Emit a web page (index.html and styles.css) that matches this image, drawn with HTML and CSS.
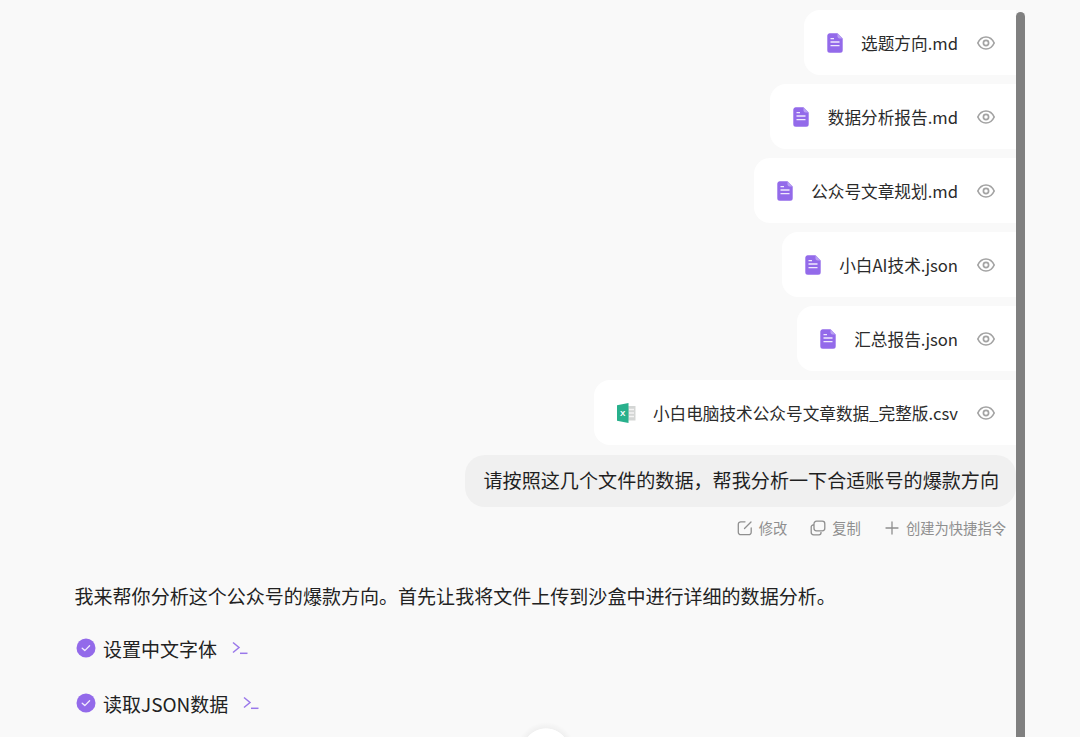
FILE: index.html
```html
<!DOCTYPE html>
<html lang="zh-CN">
<head>
<meta charset="utf-8">
<title>文件分析</title>
<link rel="stylesheet" href="styles.css">
</head>
<body>
<svg class="defs" width="0" height="0" aria-hidden="true">
  <symbol id="doc" viewBox="0 0 16 20">
    <path d="M2.500 0.300H10.500L15.700 5.500V17.200a2.500 2.500 0 0 1-2.500 2.500H2.800A2.500 2.500 0 0 1 .3 17.200V2.500A2.500 2.500 0 0 1 2.500.3z" fill="#936aea"/>
    <path d="M10.500.3L15.700 5.500H12.500a2 2 0 0 1-2-2z" fill="#b9a0f3"/>
    <path d="M3.500 5.600h3.500M3.500 9h9M3.500 12.600h9" stroke="#f0e9fd" stroke-width="1.300" fill="none"/>
  </symbol>
  <symbol id="eye" viewBox="0 0 18 14">
    <path d="M.8 7C2.700 2.900 5.600 1 9 1S15.300 2.900 17.200 7C15.300 11.100 12.400 13 9 13S2.700 11.100.8 7z" fill="none" stroke="#a3a3a3" stroke-width="1.700"/>
    <circle cx="9" cy="7" r="2.600" fill="none" stroke="#a3a3a3" stroke-width="1.700"/>
  </symbol>
  <symbol id="check" viewBox="0 0 20 20">
    <circle cx="10" cy="10" r="9.500" fill="#936aea"/>
    <path d="M6.200 10.200l2.600 2.400 4.800-4.800" fill="none" stroke="#f3edfe" stroke-width="1.300" stroke-linecap="round" stroke-linejoin="round"/>
  </symbol>
  <symbol id="term" viewBox="0 0 16 14">
    <path d="M1 1.500L7 6.500 1 11.500" fill="none" stroke="#9a78ea" stroke-width="1.500"/>
    <path d="M8 12.300h7.500" stroke="#9a78ea" stroke-width="1.500"/>
  </symbol>
</svg>

<main class="chat">
  <section class="files">
    <div class="file">
      <svg class="file-icon"><use href="#doc"/></svg>
      <span class="file-name">选题方向.md</span>
      <svg class="eye"><use href="#eye"/></svg>
    </div>
    <div class="file">
      <svg class="file-icon"><use href="#doc"/></svg>
      <span class="file-name">数据分析报告.md</span>
      <svg class="eye"><use href="#eye"/></svg>
    </div>
    <div class="file">
      <svg class="file-icon"><use href="#doc"/></svg>
      <span class="file-name">公众号文章规划.md</span>
      <svg class="eye"><use href="#eye"/></svg>
    </div>
    <div class="file">
      <svg class="file-icon"><use href="#doc"/></svg>
      <span class="file-name">小白AI技术.json</span>
      <svg class="eye"><use href="#eye"/></svg>
    </div>
    <div class="file">
      <svg class="file-icon"><use href="#doc"/></svg>
      <span class="file-name">汇总报告.json</span>
      <svg class="eye"><use href="#eye"/></svg>
    </div>
    <div class="file">
      <svg class="file-icon xls" viewBox="0 0 19 20">
        <path d="M9 3h9.500v14.500H9z" fill="#d4d6d5"/>
        <path d="M12 6.500h5M12 10h5M12 13.500h5" stroke="#f4f4f4" stroke-width="1.400"/>
        <path d="M0 2.200l11.500-2.200v20L0 17.800z" fill="#28b08c"/>
        <text x="3" y="13.300" class="xls-x">X</text>
      </svg>
      <span class="file-name">小白电脑技术公众号文章数据_完整版.csv</span>
      <svg class="eye"><use href="#eye"/></svg>
    </div>
  </section>

  <div class="bubble">请按照这几个文件的数据，帮我分析一下合适账号的爆款方向</div>

  <div class="actions">
    <span class="action">
      <svg class="action-icon" viewBox="0 0 16 16"><path d="M8 1.800H3.800a2.500 2.500 0 0 0-2.500 2.500v7.900a2.500 2.500 0 0 0 2.500 2.500h7.900a2.500 2.500 0 0 0 2.500-2.500V8M7.500 8.500L14 2" fill="none" stroke="#8f8f8f" stroke-width="1.300" stroke-linecap="round"/></svg>
      修改
    </span>
    <span class="action">
      <svg class="action-icon" viewBox="0 0 16 16"><path d="M6.500 1.200h5.800a2.500 2.500 0 0 1 2.500 2.500v4.600a2.500 2.500 0 0 1-2.500 2.500H6.500A2.500 2.500 0 0 1 4 8.300V3.700a2.500 2.500 0 0 1 2.500-2.500z" fill="none" stroke="#8f8f8f" stroke-width="1.300"/><path d="M4 5H3.200a2 2 0 0 0-2 2v5.300a2.500 2.500 0 0 0 2.500 2.500H9a2 2 0 0 0 2-2v-.8" fill="none" stroke="#8f8f8f" stroke-width="1.300"/></svg>
      复制
    </span>
    <span class="action">
      <svg class="action-icon" viewBox="0 0 16 16"><path d="M8 2v12M2 8h12" fill="none" stroke="#8f8f8f" stroke-width="1.300" stroke-linecap="round"/></svg>
      创建为快捷指令
    </span>
  </div>

  <p class="reply">我来帮你分析这个公众号的爆款方向。首先让我将文件上传到沙盒中进行详细的数据分析。</p>

  <div class="step">
    <svg class="step-check"><use href="#check"/></svg>
    <span>设置中文字体</span>
    <svg class="step-term"><use href="#term"/></svg>
  </div>
  <div class="step">
    <svg class="step-check"><use href="#check"/></svg>
    <span>读取JSON数据</span>
    <svg class="step-term"><use href="#term"/></svg>
  </div>
</main>

<div class="scrollbar"></div>
<div class="scroll-down"></div>
</body>
</html>
```
FILE: styles.css
```css
* { box-sizing: border-box; }
html, body { height: 100%; }
body {
  margin: 0;
  height: 737px;
  overflow: hidden;
  position: relative;
  background: #f9f9f9;
  color: #222;
  font-family: "Noto Sans CJK SC", "Noto Sans", sans-serif;
}
.defs { position: absolute; }
.chat {
  width: 1016px;
  height: 737px;
  padding: 10px 0 0 74.5px;
  display: flex;
  flex-direction: column;
}
.files {
  display: flex;
  flex-direction: column;
  align-items: flex-end;
  gap: 9px;
}
.file {
  height: 65px;
  display: flex;
  align-items: center;
  padding: 0 21px 0 23px;
  background: #fff;
  border-radius: 16px 0 0 16px;
}
.file-icon { width: 16px; height: 20px; margin-right: 18.5px; }
.file-icon.xls { width: 19px; margin-right: 17px; }
.xls-x { font: 700 8px "Liberation Sans", sans-serif; fill: #fff; }
.file-name { font-size: 16.65px; line-height: 24px; color: #2b2b2b; }
.eye { width: 18px; height: 14px; margin-left: 19px; }
.bubble {
  align-self: flex-end;
  margin-top: 10px;
  height: 52px;
  padding: 0 17px 2px 18.5px;
  display: flex;
  align-items: center;
  background: #f0f0f0;
  border-radius: 20px;
  font-size: 19.1px;
  color: #1f1f1f;
}
.actions {
  align-self: flex-end;
  margin-top: 10px;
  padding-right: 10px;
  display: flex;
  gap: 23px;
  font-size: 14.3px;
  line-height: 22px;
  color: #8f8f8f;
}
.action { display: flex; align-items: center; gap: 6px; }
.action-icon { width: 16px; height: 16px; }
.reply {
  margin: 41px 0 0;
  font-size: 19.05px;
  line-height: 32px;
  color: #222;
}
.step {
  display: flex;
  align-items: center;
  height: 32px;
  flex: none;
  margin-top: 20px;
  font-size: 19px;
  color: #222;
}
.step + .step { margin-top: 23px; }
.step-check { width: 20px; height: 20px; margin: 0 7px 0 1.5px; }
.step-term { width: 16px; height: 14px; margin-left: 15px; }
.scrollbar {
  position: absolute;
  left: 1016px;
  top: 12px;
  bottom: 0;
  width: 9px;
  background: #808080;
  border-radius: 5px 5px 0 0;
}
.scroll-down {
  position: absolute;
  left: 512px;
  top: 718px;
  width: 68px;
  height: 19px;
  background: radial-gradient(circle 24px at 34px 34px, #fff 97%, rgba(0, 0, 0, .035) 100%, rgba(249, 249, 249, 0) 125%);
}
```
